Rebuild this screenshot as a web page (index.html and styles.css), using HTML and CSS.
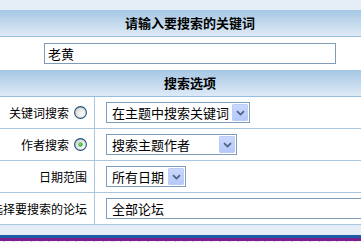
FILE: index.html
```html
<!DOCTYPE html>
<html>
<head>
<meta charset="utf-8">
<link rel="stylesheet" href="styles.css">
</head>
<body>
<div class="page">
  <div class="panel">
    <div class="head">请输入要搜索的关键词</div>
    <div class="keyrow"><div class="textbox">老黄</div></div>
    <div class="head">搜索选项</div>
    <div class="opt">
      <div class="label">关键词搜索<svg class="radio" width="13" height="13" viewBox="0 0 13 13"><defs><radialGradient id="rg1" cx="0.65" cy="0.65" r="0.7"><stop offset="0" stop-color="#ffffff"/><stop offset="1" stop-color="#d4d4cc"/></radialGradient></defs><circle cx="6.5" cy="6.5" r="5.9" fill="url(#rg1)" stroke="#1c5180" stroke-width="1.1"/></svg></div>
      <div class="val"><div class="sel w1"><span>在主题中搜索关键词</span><i class="btn"><svg width="9" height="6" viewBox="0 0 9 6"><path d="M1 1.2 L4.5 4.6 L8 1.2" fill="none" stroke="#4d6185" stroke-width="1.8"/></svg></i></div></div>
    </div>
    <div class="opt">
      <div class="label">作者搜索<svg class="radio" width="13" height="13" viewBox="0 0 13 13"><defs><radialGradient id="rg2" cx="0.65" cy="0.65" r="0.7"><stop offset="0" stop-color="#ffffff"/><stop offset="1" stop-color="#d4d4cc"/></radialGradient><radialGradient id="gd" cx="0.4" cy="0.4" r="0.7"><stop offset="0" stop-color="#7ee07e"/><stop offset="1" stop-color="#21a121"/></radialGradient></defs><circle cx="6.5" cy="6.5" r="5.9" fill="url(#rg2)" stroke="#1c5180" stroke-width="1.1"/><circle cx="6.5" cy="6.5" r="2.2" fill="url(#gd)"/></svg></div>
      <div class="val"><div class="sel w2"><span>搜索主题作者</span><i class="btn"><svg width="9" height="6" viewBox="0 0 9 6"><path d="M1 1.2 L4.5 4.6 L8 1.2" fill="none" stroke="#4d6185" stroke-width="1.8"/></svg></i></div></div>
    </div>
    <div class="opt">
      <div class="label">日期范围</div>
      <div class="val"><div class="sel w3"><span>所有日期</span><i class="btn"><svg width="9" height="6" viewBox="0 0 9 6"><path d="M1 1.2 L4.5 4.6 L8 1.2" fill="none" stroke="#4d6185" stroke-width="1.8"/></svg></i></div></div>
    </div>
    <div class="opt">
      <div class="label">选择要搜索的论坛</div>
      <div class="val"><div class="sel w4"><span>全部论坛</span></div></div>
    </div>
  </div>
  <div class="gap"></div>
  <div class="bar-blue"></div>
  <div class="bar-purple"></div>
  <div class="noise"></div>
</div>
</body>
</html>
```
FILE: styles.css
```css
html, body {
  margin: 0;
  padding: 0;
  overflow: hidden;
  background: #e5eef7;
}
body {
  width: 361px;
  height: 242px;
  font-family: "Noto Sans CJK SC", "Liberation Sans", sans-serif;
  color: #000;
}
.page {
  padding-top: 10px;
}
.panel {
  margin-left: -12px;
  width: 404px;
  background: #fff;
}
.head {
  height: 26px;
  line-height: 26px;
  text-align: center;
  font-size: 13px;
  font-weight: bold;
  background: linear-gradient(#a5c7e4, #dfeaf6);
  border-bottom: 1px solid #94bedf;
}
.keyrow {
  height: 33px;
  display: flex;
  align-items: center;
  justify-content: center;
}
.textbox {
  box-sizing: border-box;
  width: 292px;
  height: 21px;
  border: 1px solid #7f9db9;
  font-size: 13px;
  line-height: 19px;
  padding-left: 3px;
}
.opt {
  display: grid;
  grid-template-columns: 107px 1fr;
  height: 31px;
  border-bottom: 1px solid #a9c6df;
}
.label {
  border-right: 1px solid #a9c6df;
  display: flex;
  align-items: center;
  justify-content: flex-end;
  gap: 5px;
  padding-right: 7px;
  font-size: 12px;
  white-space: nowrap;
}
.radio {
  display: block;
}
.val {
  display: flex;
  align-items: center;
  padding-left: 11px;
}
.sel {
  box-sizing: border-box;
  height: 21px;
  border: 1px solid #7f9db9;
  display: flex;
  align-items: center;
  justify-content: space-between;
  font-size: 13px;
  padding: 1px 1px 1px 5px;
  background: #fff;
}
.sel span {
  line-height: 17px;
}
.w1 { width: 144px; }
.w2 { width: 131px; }
.w3 { width: 80px; }
.w4 { width: 290px; }
.btn {
  box-sizing: border-box;
  width: 16px;
  height: 17px;
  background: linear-gradient(#c9d8fd, #b5c8f9);
  border: 1px solid #bccdf6;
  border-radius: 1px;
  display: flex;
  align-items: center;
  justify-content: center;
}
.btn svg { display: block; }
.gap {
  height: 10px;
}
.bar-blue {
  height: 3px;
  background: #1f5ba6;
}
.bar-purple {
  height: 3px;
  background: #7a1f8b;
}
.noise {
  height: 10px;
  background: repeating-linear-gradient(90deg, #ffffff 0 3px, #d9cfe8 3px 5px, #f4f0f8 5px 9px);
}
```
